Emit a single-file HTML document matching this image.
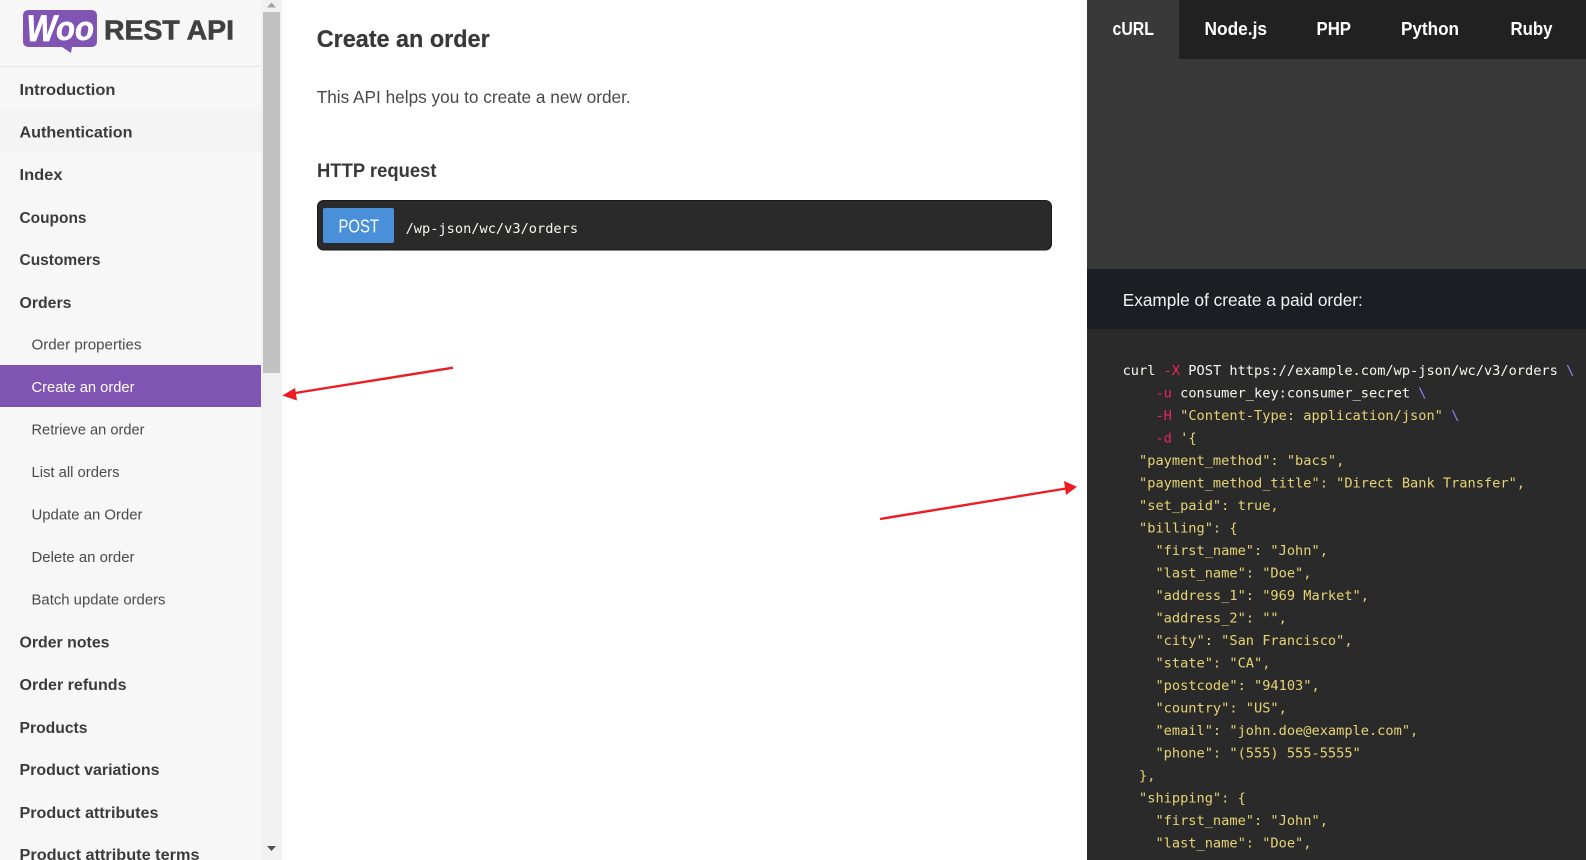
<!DOCTYPE html>
<html lang="en"><head><meta charset="utf-8"><title>WooCommerce REST API</title>
<style>
html,body{margin:0;padding:0;width:1586px;height:860px;overflow:hidden;background:#fff}
svg{display:block;font-family:"Liberation Sans",Arial,sans-serif}
.b{font-weight:700;font-size:15.5px;fill:#3b3b3b}
.s{font-size:15px;fill:#4a4a4a}
.t{font-weight:700;font-size:18px;fill:#fff}
.c{font-family:"DejaVu Sans Mono","Liberation Mono",monospace;font-size:13.65px;fill:#e6d373;white-space:pre}
.w{fill:#f8f8f2}.r{fill:#f0245f}.p{fill:#9d7cf0}
</style></head><body>
<svg width="1586" height="860" viewBox="0 0 1586 860" xmlns="http://www.w3.org/2000/svg">
<rect width="261" height="860" fill="#f7f7f7"/>
<rect y="110" width="261" height="42" fill="#f4f4f4"/>
<rect y="66" width="261" height="1" fill="#e4e4e4"/>
<rect y="365" width="261" height="42" fill="#7f54b3"/>
<rect x="261" width="21" height="860" fill="#f1f1f1"/>
<rect x="263" y="12" width="17" height="361" fill="#c1c1c1"/>
<path d="M267 7.5L271.5 2.5L276 7.5Z" fill="#a3a3a3"/>
<path d="M267 846L271.5 851L276 846Z" fill="#505050"/>

<path d="M29 10H91Q97 10 97 16V41Q97 47 91 47H72L71 53L62 47H29Q23 47 23 41V16Q23 10 29 10Z" fill="#7f54b3"/>
<text x="26.5" y="41" font-size="37" font-weight="700" font-style="italic" fill="#fff" stroke="#fff" stroke-width=".7" textLength="30" lengthAdjust="spacingAndGlyphs">W</text>
<text x="56" y="40" font-size="34" font-weight="700" font-style="italic" fill="#fff" stroke="#fff" stroke-width=".5" textLength="38" lengthAdjust="spacingAndGlyphs">oo</text>
<text x="104" y="39.5" font-size="28" font-weight="700" fill="#404040" stroke="#404040" stroke-width=".6" textLength="130" lengthAdjust="spacingAndGlyphs">REST API</text>

<text class="b" x="19.5" y="95" textLength="96" lengthAdjust="spacingAndGlyphs">Introduction</text>
<text class="b" x="19.5" y="137.7" textLength="113" lengthAdjust="spacingAndGlyphs">Authentication</text>
<text class="b" x="19.5" y="180" textLength="43" lengthAdjust="spacingAndGlyphs">Index</text>
<text class="b" x="19.5" y="222.8" textLength="67" lengthAdjust="spacingAndGlyphs">Coupons</text>
<text class="b" x="19.5" y="265" textLength="81" lengthAdjust="spacingAndGlyphs">Customers</text>
<text class="b" x="19.5" y="307.8" textLength="52" lengthAdjust="spacingAndGlyphs">Orders</text>
<text class="s" x="31.5" y="349.5" textLength="110" lengthAdjust="spacingAndGlyphs">Order properties</text>
<text class="s" x="31.5" y="392" textLength="103" lengthAdjust="spacingAndGlyphs" style="fill:#fff">Create an order</text>
<text class="s" x="31.5" y="434.5" textLength="113" lengthAdjust="spacingAndGlyphs">Retrieve an order</text>
<text class="s" x="31.5" y="477" textLength="88" lengthAdjust="spacingAndGlyphs">List all orders</text>
<text class="s" x="31.5" y="519.5" textLength="111" lengthAdjust="spacingAndGlyphs">Update an Order</text>
<text class="s" x="31.5" y="562" textLength="103" lengthAdjust="spacingAndGlyphs">Delete an order</text>
<text class="s" x="31.5" y="604.5" textLength="134" lengthAdjust="spacingAndGlyphs">Batch update orders</text>
<text class="b" x="19.5" y="647.7" textLength="90" lengthAdjust="spacingAndGlyphs">Order notes</text>
<text class="b" x="19.5" y="690" textLength="107" lengthAdjust="spacingAndGlyphs">Order refunds</text>
<text class="b" x="19.5" y="732.8" textLength="68" lengthAdjust="spacingAndGlyphs">Products</text>
<text class="b" x="19.5" y="775" textLength="140" lengthAdjust="spacingAndGlyphs">Product variations</text>
<text class="b" x="19.5" y="817.8" textLength="139" lengthAdjust="spacingAndGlyphs">Product attributes</text>
<text class="b" x="19.5" y="860" textLength="180" lengthAdjust="spacingAndGlyphs">Product attribute terms</text>

<text x="316.7" y="47" font-size="24" font-weight="700" fill="#383838" stroke="#383838" stroke-width=".25" textLength="173" lengthAdjust="spacingAndGlyphs">Create an order</text>
<text x="316.7" y="102.9" font-size="17.5" fill="#484848" textLength="314" lengthAdjust="spacingAndGlyphs">This API helps you to create a new order.</text>
<text x="317" y="177" font-size="19.5" font-weight="700" fill="#383838" textLength="119.5" lengthAdjust="spacingAndGlyphs">HTTP request</text>
<rect x="317.5" y="200.5" width="734" height="49.5" rx="6" fill="#2a2a2a" stroke="#1a1a1a" stroke-width="1"/>
<rect x="323" y="208" width="71" height="35" rx="2" fill="#4a90d9"/>
<text x="338.5" y="232.7" font-size="18" fill="#fff" textLength="40.5" lengthAdjust="spacingAndGlyphs">POST</text>
<text class="c" x="405.6" y="233" style="fill:#f8f8f2">/wp-json/wc/v3/orders</text>

<rect x="1087" width="499" height="860" fill="#2a2a2a"/>
<rect x="1087" width="499" height="269" fill="#393939"/>
<rect x="1087" width="499" height="59" fill="#212121"/>
<rect x="1087" width="92" height="59" fill="#393939"/>
<text class="t" x="1112.5" y="35" textLength="41.5" lengthAdjust="spacingAndGlyphs">cURL</text>
<text class="t" x="1204.5" y="35" textLength="62.5" lengthAdjust="spacingAndGlyphs">Node.js</text>
<text class="t" x="1316.5" y="35" textLength="34.5" lengthAdjust="spacingAndGlyphs">PHP</text>
<text class="t" x="1401" y="35" textLength="58" lengthAdjust="spacingAndGlyphs">Python</text>
<text class="t" x="1510.5" y="35" textLength="42" lengthAdjust="spacingAndGlyphs">Ruby</text>
<rect x="1087" y="269" width="499" height="60" fill="#1b1f23"/>
<text x="1122.8" y="305.9" font-size="17.5" fill="#f2f2f2" textLength="240" lengthAdjust="spacingAndGlyphs">Example of create a paid order:</text>

<text class="c" x="1122.6" y="375"><tspan class="w">curl </tspan><tspan class="r">-X</tspan><tspan class="w"> POST https://example.com/wp-json/wc/v3/orders </tspan><tspan class="p">\</tspan></text>
<text class="c" x="1122.6" y="397.5">    <tspan class="r">-u</tspan><tspan class="w"> consumer_key:consumer_secret </tspan><tspan class="p">\</tspan></text>
<text class="c" x="1122.6" y="420">    <tspan class="r">-H</tspan> "Content-Type: application/json" <tspan class="p">\</tspan></text>
<text class="c" x="1122.6" y="442.5">    <tspan class="r">-d</tspan> '{</text>
<text class="c" x="1122.6" y="465">  "payment_method": "bacs",</text>
<text class="c" x="1122.6" y="487.6">  "payment_method_title": "Direct Bank Transfer",</text>
<text class="c" x="1122.6" y="510">  "set_paid": true,</text>
<text class="c" x="1122.6" y="532.6">  "billing": {</text>
<text class="c" x="1122.6" y="555">    "first_name": "John",</text>
<text class="c" x="1122.6" y="577.5">    "last_name": "Doe",</text>
<text class="c" x="1122.6" y="600">    "address_1": "969 Market",</text>
<text class="c" x="1122.6" y="622.5">    "address_2": "",</text>
<text class="c" x="1122.6" y="645">    "city": "San Francisco",</text>
<text class="c" x="1122.6" y="667.6">    "state": "CA",</text>
<text class="c" x="1122.6" y="690">    "postcode": "94103",</text>
<text class="c" x="1122.6" y="712.6">    "country": "US",</text>
<text class="c" x="1122.6" y="735">    "email": "john.doe@example.com",</text>
<text class="c" x="1122.6" y="757.6">    "phone": "(555) 555-5555"</text>
<text class="c" x="1122.6" y="780">  },</text>
<text class="c" x="1122.6" y="802.6">  "shipping": {</text>
<text class="c" x="1122.6" y="825">    "first_name": "John",</text>
<text class="c" x="1122.6" y="847.6">    "last_name": "Doe",</text>

<path d="M453 367.7L292 393.5" stroke="#ed1c24" stroke-width="2.4" fill="none"/>
<path d="M282.3 395.5L295 388L297 400.5Z" fill="#ed1c24"/>
<path d="M880 519L1066 488.5" stroke="#ed1c24" stroke-width="2.4" fill="none"/>
<path d="M1077 486.7L1064 481L1066 495Z" fill="#ed1c24"/>
</svg>
</body></html>
